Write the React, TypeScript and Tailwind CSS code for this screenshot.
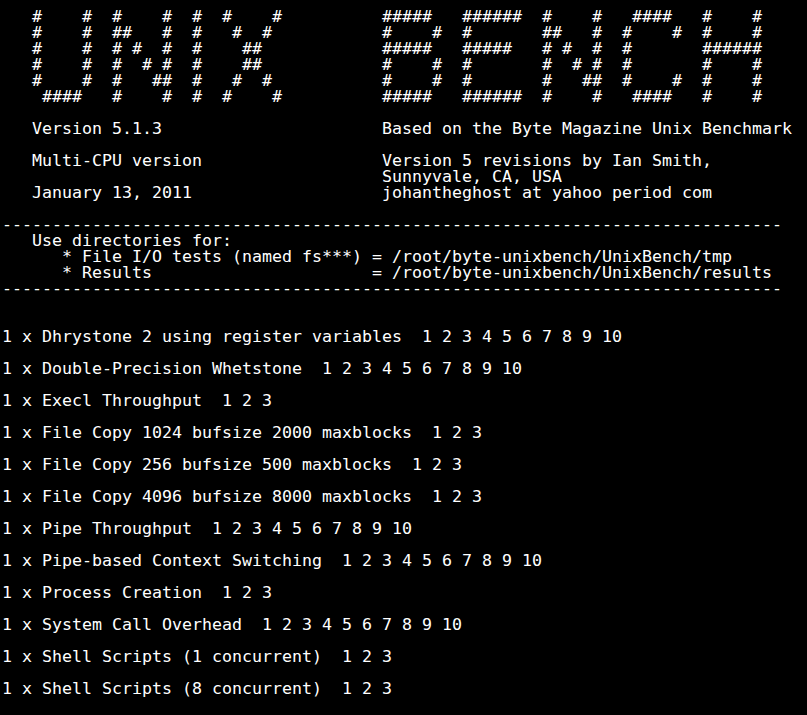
const banner = [
  "   #    #  #    #  #  #    #          #####   ######  #    #   ####   #    #",
  "   #    #  ##   #  #   #  #           #    #  #       ##   #  #    #  #    #",
  "   #    #  # #  #  #    ##            #####   #####   # #  #  #       ######",
  "   #    #  #  # #  #    ##            #    #  #       #  # #  #       #    #",
  "   #    #  #   ##  #   #  #           #    #  #       #   ##  #    #  #    #",
  "    ####   #    #  #  #    #          #####   ######  #    #   ####   #    #",
  "",
  "   Version 5.1.3                      Based on the Byte Magazine Unix Benchmark",
  "",
  "   Multi-CPU version                  Version 5 revisions by Ian Smith,",
  "                                      Sunnyvale, CA, USA",
  "   January 13, 2011                   johantheghost at yahoo period com",
  "",
  "-".repeat(78),
  "   Use directories for:",
  "      * File I/O tests (named fs***) = /root/byte-unixbench/UnixBench/tmp",
  "      * Results                      = /root/byte-unixbench/UnixBench/results",
  "-".repeat(78),
  "",
  "",
];

const tests = [
  "1 x Dhrystone 2 using register variables  1 2 3 4 5 6 7 8 9 10",
  "1 x Double-Precision Whetstone  1 2 3 4 5 6 7 8 9 10",
  "1 x Execl Throughput  1 2 3",
  "1 x File Copy 1024 bufsize 2000 maxblocks  1 2 3",
  "1 x File Copy 256 bufsize 500 maxblocks  1 2 3",
  "1 x File Copy 4096 bufsize 8000 maxblocks  1 2 3",
  "1 x Pipe Throughput  1 2 3 4 5 6 7 8 9 10",
  "1 x Pipe-based Context Switching  1 2 3 4 5 6 7 8 9 10",
  "1 x Process Creation  1 2 3",
  "1 x System Call Overhead  1 2 3 4 5 6 7 8 9 10",
  "1 x Shell Scripts (1 concurrent)  1 2 3",
  "1 x Shell Scripts (8 concurrent)  1 2 3",
];

export default function App() {
  const lines = [...banner, ...tests.flatMap((t, i) => (i === 0 ? [t] : ["", t]))];
  return (
    <div className="h-[715px] w-[807px] overflow-hidden bg-black pt-[9px] pl-[2px] font-['DejaVu_Sans_Mono',monospace] text-[16.61px] leading-[16px] text-white">
      {lines.map((line, i) => (
        <pre key={i} className="h-4 font-['DejaVu_Sans_Mono',monospace] whitespace-pre">
          {line}
        </pre>
      ))}
    </div>
  );
}
